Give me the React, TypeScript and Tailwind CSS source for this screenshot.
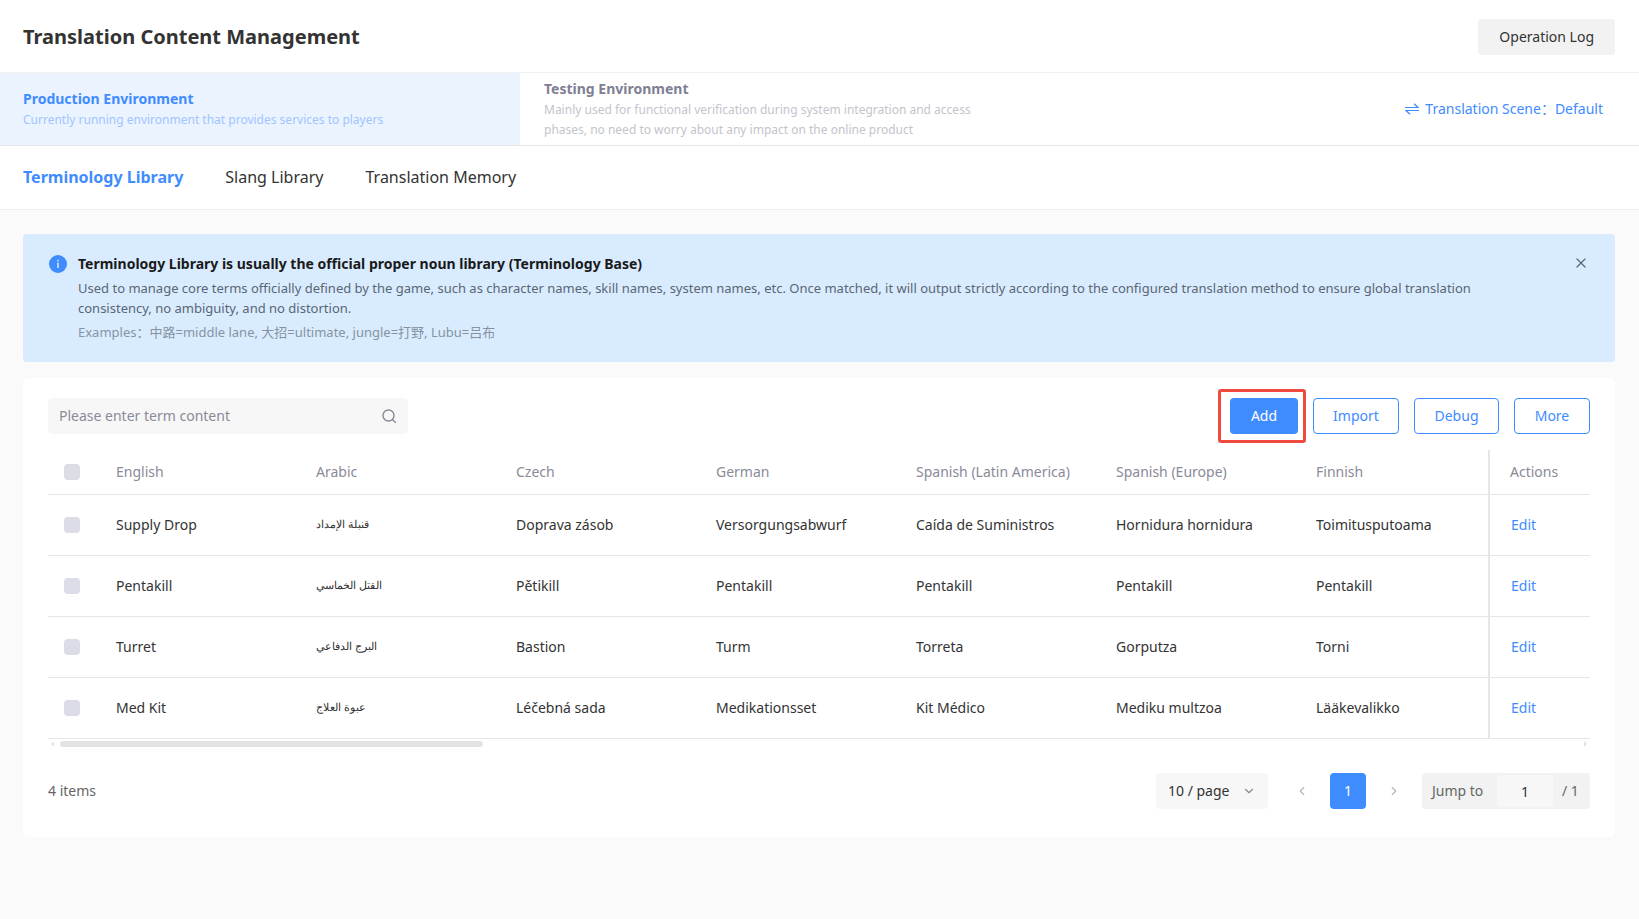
import { useState } from 'react'
import { ChevronDown, ChevronLeft, ChevronRight, X } from 'lucide-react'

const LANGUAGES = ['English', 'Arabic', 'Czech', 'German', 'Spanish (Latin America)', 'Spanish (Europe)', 'Finnish']

const TERMS = [
  ['Supply Drop', 'قنبلة الإمداد', 'Doprava zásob', 'Versorgungsabwurf', 'Caída de Suministros', 'Hornidura hornidura', 'Toimitusputoama'],
  ['Pentakill', 'القتل الخماسي', 'Pětikill', 'Pentakill', 'Pentakill', 'Pentakill', 'Pentakill'],
  ['Turret', 'البرج الدفاعي', 'Bastion', 'Turm', 'Torreta', 'Gorputza', 'Torni'],
  ['Med Kit', 'عبوة العلاج', 'Léčebná sada', 'Medikationsset', 'Kit Médico', 'Mediku multzoa', 'Lääkevalikko'],
]

const TABS = ['Terminology Library', 'Slang Library', 'Translation Memory']

function Checkbox({ label }: { label: string }) {
  return (
    <input
      type="checkbox"
      aria-label={label}
      className="block size-4 appearance-none rounded bg-[#dcdce6] checked:bg-[#3f8cff]"
    />
  )
}

function SwapIcon() {
  return (
    <svg width="14" height="12" viewBox="0 0 14 12" fill="none" stroke="currentColor" strokeWidth="1.2" aria-hidden>
      <path d="M0 4.5h13L9 .8" />
      <path d="M14 7.5H1l4 3.7" />
    </svg>
  )
}

function SearchIcon() {
  return (
    <svg width="16" height="16" viewBox="0 0 16 16" fill="none" stroke="currentColor" strokeWidth="1.4" aria-hidden>
      <circle cx="7.5" cy="7.5" r="5.5" />
      <path d="M11.4 11.4l3.4 3.4" />
    </svg>
  )
}

function Header() {
  return (
    <header className="flex h-[73px] items-center justify-between border-b border-[#f0f0f0] bg-white pt-[2px] pr-6 pl-[23px]">
      <h1 className="text-xl font-bold">Translation Content Management</h1>
      <button type="button" className="h-9 rounded bg-[#f2f2f2] px-[21px]">
        Operation Log
      </button>
    </header>
  )
}

function EnvironmentBar() {
  return (
    <div className="flex h-[73px] border-b border-[#e6e6e6] bg-white">
      <button type="button" className="w-[520px] bg-[#ebf3ff] px-[23px] text-left">
        <span className="block leading-5 font-bold text-[#3f8cff]">Production Environment</span>
        <span className="mt-px block text-xs leading-5 text-[#9fc5ff]">
          Currently running environment that provides services to players
        </span>
      </button>
      <button type="button" className="w-[520px] px-6 text-left">
        <span className="block leading-5 font-bold text-[#808094]">Testing Environment</span>
        <span className="mt-px block text-xs leading-5 text-[#c4c4cc]">
          Mainly used for functional verification during system integration and access phases, no need to worry about
          any impact on the online product
        </span>
      </button>
      <button type="button" className="ml-auto flex items-center gap-[6px] pr-9 text-[#3f8cff]">
        <SwapIcon />
        Translation Scene：Default
      </button>
    </div>
  )
}

function LibraryTabs({ active, onSelect }: { active: string; onSelect: (tab: string) => void }) {
  return (
    <nav className="flex h-16 items-center gap-[42px] border-b border-[#f0f0f0] bg-white px-[23px] pb-[2px] text-base">
      {TABS.map((tab) => (
        <button
          key={tab}
          type="button"
          onClick={() => onSelect(tab)}
          className={tab === active ? 'font-bold text-[#3f8cff]' : ''}
        >
          {tab}
        </button>
      ))}
    </nav>
  )
}

function InfoBanner({ onClose }: { onClose: () => void }) {
  return (
    <section className="flex min-h-32 items-start rounded bg-[#d9ecff] px-[26px] pt-5 pb-4">
      <svg className="mt-px shrink-0" width="18" height="18" viewBox="0 0 18 18" aria-hidden>
        <circle cx="9" cy="9" r="9" fill="#3f8cff" />
        <path d="M9 7.5v5.5M9 4.8v1.4" stroke="#fff" strokeWidth="1.2" />
      </svg>
      <div className="ml-[11px] flex-1 pr-[84px]">
        <h2 className="leading-5 font-bold text-[#1a1a1a]">
          Terminology Library is usually the official proper noun library (Terminology Base)
        </h2>
        <p className="mt-1 text-[13px] leading-5 text-[#596673]">
          Used to manage core terms officially defined by the game, such as character names, skill names, system names,
          etc. Once matched, it will output strictly according to the configured translation method to ensure global
          translation consistency, no ambiguity, and no distortion.
        </p>
        <p className="mt-1 text-[13px] leading-5 text-[#8793a1]">
          Examples：中路=middle lane, 大招=ultimate, jungle=打野, Lubu=吕布
        </p>
      </div>
      <button type="button" aria-label="Close" onClick={onClose} className="mt-px text-[#596673]">
        <X size={16} strokeWidth={1.8} />
      </button>
    </section>
  )
}

function Toolbar() {
  const outline = 'h-9 rounded border border-[#3f8cff] text-[#3f8cff]'
  return (
    <div className="flex items-center justify-between">
      <div className="flex h-9 w-[360px] items-center rounded bg-[#f7f7f7] pr-[11px] pl-[11px] text-[#8a8a99]">
        <input
          type="text"
          aria-label="Term content"
          placeholder="Please enter term content"
          className="min-w-0 flex-1 bg-transparent outline-none placeholder:text-[#8a8a99]"
        />
        <SearchIcon />
      </div>
      <div className="flex items-center gap-[15px]">
        <div className="relative">
          <button type="button" className="h-9 w-[68px] rounded bg-[#3f8cff] text-white">
            Add
          </button>
          <span className="pointer-events-none absolute -top-[9px] -right-2 -bottom-[9px] -left-3 rounded-[3px] border-3 border-[#f04a3f]" />
        </div>
        <button type="button" className={`${outline} w-[86px]`}>
          Import
        </button>
        <button type="button" className={`${outline} w-[85px]`}>
          Debug
        </button>
        <button type="button" className={`${outline} w-[76px]`}>
          More
        </button>
      </div>
    </div>
  )
}

function TermTable() {
  return (
    <div className="mt-4">
      <div className="overflow-hidden">
        <table className="w-full table-fixed border-separate border-spacing-0 text-left whitespace-nowrap">
          <colgroup>
            <col className="w-12" />
            <col className="w-[200px]" />
            <col className="w-[200px]" />
            <col className="w-[200px]" />
            <col className="w-[200px]" />
            <col className="w-[200px]" />
            <col className="w-[200px]" />
            <col />
            <col className="w-[102px]" />
          </colgroup>
          <thead>
            <tr className="h-[45px] text-[#8a8a99]">
              <th className="border-b border-[#e6e6e6] px-4">
                <Checkbox label="Select all" />
              </th>
              {LANGUAGES.map((language) => (
                <th key={language} className="border-b border-[#e6e6e6] px-5 font-normal">
                  {language}
                </th>
              ))}
              <th className="border-b border-l-2 border-[#e6e6e6] px-5 font-normal">Actions</th>
            </tr>
          </thead>
          <tbody>
            {TERMS.map((term) => (
              <tr key={term[0]} className="h-[61px]">
                <td className="border-b border-[#e6e6e6] px-4">
                  <Checkbox label={`Select ${term[0]}`} />
                </td>
                {term.map((text, i) => (
                  <td key={LANGUAGES[i]} className="border-b border-[#e6e6e6] px-5">
                    {i === 1 ? <span className="block pb-[2px] text-[11px]">{text}</span> : text}
                  </td>
                ))}
                <td className="border-b border-l-2 border-[#e6e6e6] px-[21px]">
                  <button type="button" className="text-[#3f8cff]">
                    Edit
                  </button>
                </td>
              </tr>
            ))}
          </tbody>
        </table>
      </div>
      <div className="flex h-[10px] items-center justify-between px-[3px] pb-px text-[#e3e3e3]">
        <svg width="3" height="6" viewBox="0 0 3 6" fill="currentColor" aria-hidden>
          <path d="M3 0v6L0 3z" />
        </svg>
        <div className="ml-[6px] flex-1">
          <div className="h-[6px] w-[423px] rounded-full bg-[#e3e3e3]" />
        </div>
        <svg width="3" height="6" viewBox="0 0 3 6" fill="currentColor" aria-hidden>
          <path d="M0 0v6l3-3z" />
        </svg>
      </div>
    </div>
  )
}

function Pagination() {
  return (
    <div className="mt-6 flex h-9 items-center">
      <span className="text-[#666666]">4 items</span>
      <div className="relative ml-auto">
        <select
          aria-label="Items per page"
          defaultValue="10"
          className="h-9 w-28 appearance-none rounded bg-[#f7f7f7] pl-3 outline-none"
        >
          <option value="10">10 / page</option>
          <option value="20">20 / page</option>
          <option value="50">50 / page</option>
        </select>
        <ChevronDown size={14} className="pointer-events-none absolute top-[11px] right-3 text-[#8a8a99]" />
      </div>
      <button type="button" aria-label="Previous page" className="ml-4 flex size-9 items-center justify-center text-[#b8b8b8]">
        <ChevronLeft size={14} />
      </button>
      <button type="button" className="ml-[10px] size-9 rounded bg-[#3f8cff] text-white">
        1
      </button>
      <button type="button" aria-label="Next page" className="ml-[10px] flex size-9 items-center justify-center text-[#b8b8b8]">
        <ChevronRight size={14} />
      </button>
      <div className="ml-[10px] flex h-9 w-[168px] items-center rounded bg-[#f2f2f2] pl-[10px] text-[#666666]">
        <label htmlFor="jump-to" className="w-[65px]">
          Jump to
        </label>
        <input
          id="jump-to"
          type="text"
          defaultValue="1"
          className="h-8 w-14 rounded bg-[#f7f7f7] text-center text-[#333333] outline-none"
        />
        <span className="ml-[9px]">/ 1</span>
      </div>
    </div>
  )
}

export default function App() {
  const [tab, setTab] = useState(TABS[0])
  const [showBanner, setShowBanner] = useState(true)

  return (
    <div className="min-h-screen bg-[#fafafa] font-['Noto_Sans','Noto_Sans_CJK_SC',sans-serif] text-sm text-[#333333]">
      <Header />
      <EnvironmentBar />
      <LibraryTabs active={tab} onSelect={setTab} />
      <main className="flex flex-col gap-4 pt-6 pr-6 pb-10 pl-[23px]">
        {showBanner && <InfoBanner onClose={() => setShowBanner(false)} />}
        <section className="rounded-md bg-white px-[25px] pt-5 pb-7">
          <Toolbar />
          <TermTable />
          <Pagination />
        </section>
      </main>
    </div>
  )
}
